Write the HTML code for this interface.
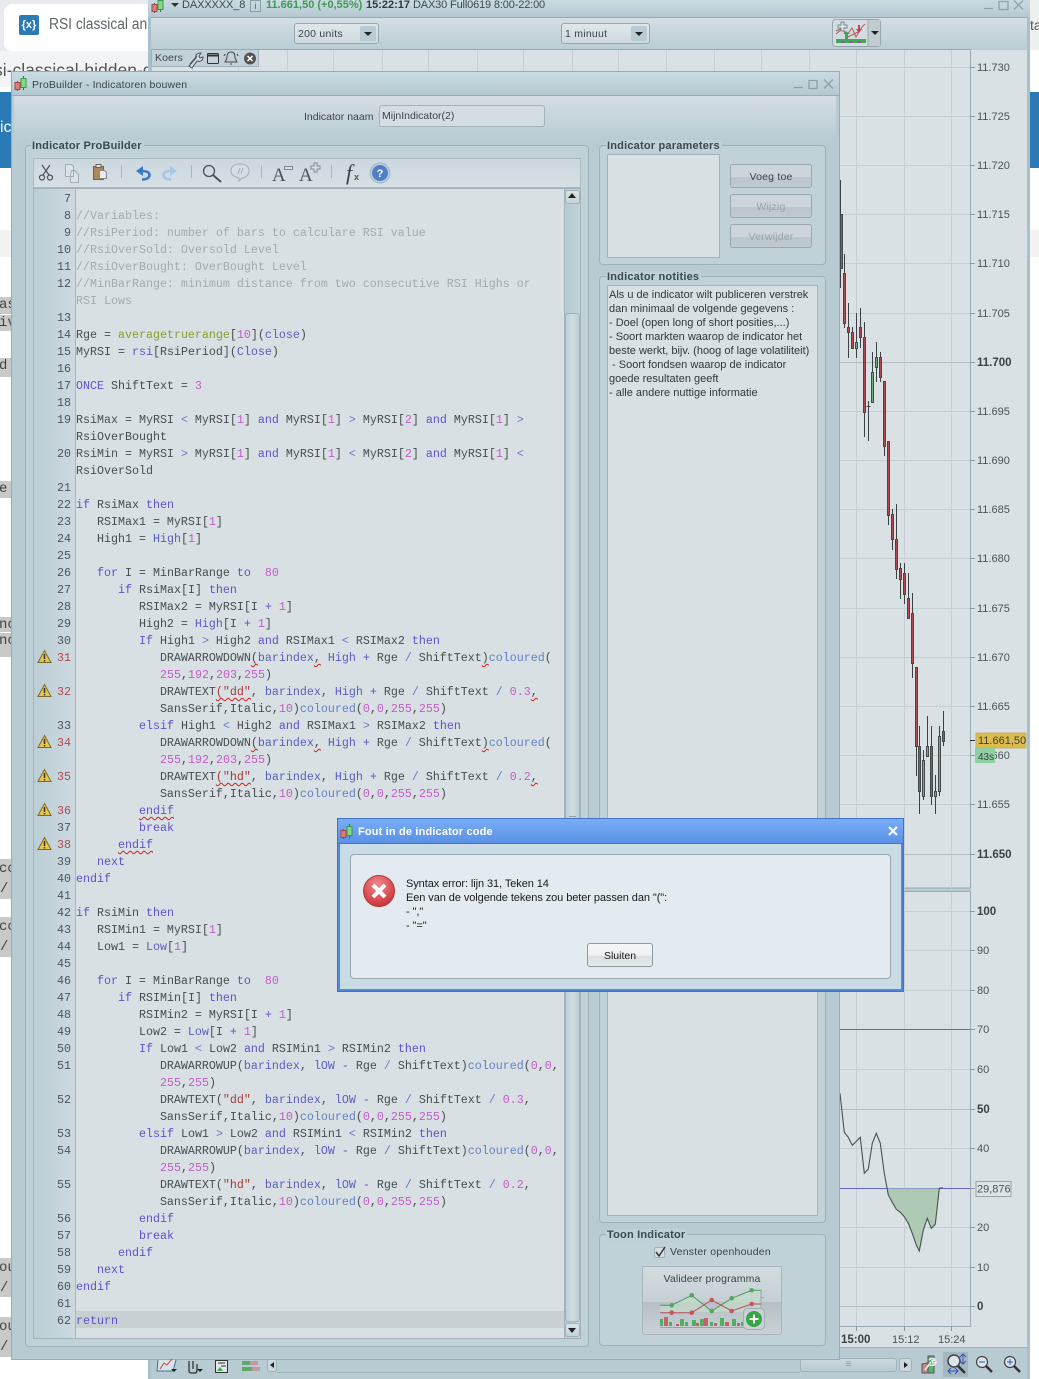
<!DOCTYPE html>
<html><head><meta charset="utf-8"><title>ProBuilder</title>
<style>
html,body{margin:0;padding:0;background:#fff}
body{width:1039px;height:1379px;position:relative;overflow:hidden;font-family:"Liberation Sans",sans-serif;font-size:10.5px;color:#3c4448}
.a{position:absolute}
.g{background:#c9c9c9;color:#444;font-size:14px;left:0;width:11px;overflow:hidden;white-space:nowrap;position:absolute;line-height:17px;font-family:"Liberation Mono",monospace;text-indent:-1px}
.dd{position:absolute;height:19px;top:23px;border:1px solid #94a6ae;border-radius:3px;background:linear-gradient(#dfe7ea,#cfdadf);font-size:10.5px;line-height:20px;padding-left:3px;box-sizing:content-box;letter-spacing:.25px}
.dd i{position:absolute;right:2px;top:2px;width:16px;height:15px;background:#b9ccd4;border-radius:2px}
.dd i:after{content:"";position:absolute;left:4px;top:6px;border:4px solid transparent;border-top:4px solid #222;border-bottom:0}
.grp{position:absolute;border:1px solid #9fb1b9;border-radius:4px;background:#c1d1d8;box-sizing:border-box}
.lbl{position:absolute;font-weight:bold;font-size:11px;color:#3c4a50;background:#bed0d8;padding:0 2px 1px 1px;border-radius:3px;line-height:13px;white-space:nowrap;letter-spacing:.2px}
.btn{position:absolute;left:730px;width:82px;height:24px;box-sizing:border-box;border:1px solid #98a8af;border-radius:3px;background:linear-gradient(#ccd6da 0,#ccd6da 55%,#bac6cb 56%,#c0cbd0 100%);text-align:center;line-height:24px;font-size:10.5px;color:#3c4448;letter-spacing:.2px}
.btn.d{color:#98a2a7}
pre{margin:0;font-family:"Liberation Mono",monospace;font-size:11.67px;line-height:17px;position:absolute;white-space:pre}
#code{left:76px;top:191px;color:#474d51}
#nums{left:33px;width:38px;top:191px;text-align:right;color:#4d5559}
#nums b{font-weight:normal;color:#b5474f}
s{text-decoration:none}
.k{color:#5d52c9}.n{color:#c45cc8}.c{color:#a3abae}.h{color:#5a5fbd}.o{color:#6a78c8}.f{color:#8c9c2e}.u{color:#6382c4}.q{color:#a83a3a}
.w{text-decoration:underline wavy #d02020 1px;text-underline-offset:2px}
</style></head><body>

<!-- browser behind -->
<div class="a" style="left:0;top:0;width:148px;height:72px;background:#e8eaed"></div>
<div class="a" style="left:4px;top:4px;width:144px;height:47px;background:#fff;border-radius:8px 0 0 8px"></div>
<div class="a" style="left:0;top:51px;width:148px;height:36px;background:#f3f4f5"></div>
<div class="a" style="left:19px;top:15px;width:20px;height:20px;background:#2b7ab6;border-radius:2px;color:#fff;font-size:11px;line-height:20px;text-align:center;font-weight:bold">{x}</div>
<div class="a" style="left:49px;top:15px;width:110px;overflow:hidden;font-size:15.5px;line-height:20px;color:#5f6368;white-space:nowrap;transform:scaleX(.89);transform-origin:0 0">RSI classical and</div>
<div class="a" style="left:-6px;top:60px;width:154px;overflow:hidden;font-size:17.5px;line-height:20px;color:#555;white-space:nowrap">si-classical-hidden-divergence</div>
<div class="a" style="left:0;top:92px;width:12px;height:76px;background:#2a7ab8;color:#fff;font-size:16px;line-height:72px;overflow:hidden">ic</div>
<div class="a" style="left:0;top:230px;width:12px;height:27px;background:#f2f2f2"></div>
<div class="g" style="top:297px;height:17px">as</div><div class="g" style="top:315px;height:16px">iv</div>
<div class="g" style="top:358px;height:19px">d'</div><div class="g" style="top:481px;height:17px">e</div>
<div class="g" style="top:617px;height:15px">nc</div><div class="g" style="top:633px;height:24px">nc</div>
<div class="g" style="top:859px;height:40px;line-height:20px">cc<br>/</div><div class="g" style="top:917px;height:40px;line-height:20px">cc<br>/</div>
<div class="g" style="top:1258px;height:39px;line-height:20px">ou<br>/</div><div class="g" style="top:1317px;height:40px;line-height:20px">ou<br>/</div>
<!-- right of main window -->
<div class="a" style="left:1030px;top:0;width:9px;height:50px;background:#eef0f1;color:#555;font-size:14px;line-height:50px;overflow:hidden">ta</div>
<div class="a" style="left:1030px;top:92px;width:9px;height:76px;background:#2a7ab8"></div>
<div class="a" style="left:1030px;top:230px;width:9px;height:27px;background:#f2f2f2"></div>

<!-- main window -->
<div class="a" style="left:148px;top:0;width:882px;height:1379px;background:#b8cbd3"></div>
<div class="a" style="left:148px;top:0;width:882px;height:17px;background:linear-gradient(#c9dae1,#b5c9d2);border-bottom:1px solid #98abb4"></div>
<div class="a" style="left:151px;top:18px;width:876px;height:32px;background:linear-gradient(#d4dfe3,#b9ccd4)"></div>
<div class="a" style="left:182px;top:-1px;font-size:11px;line-height:13px;white-space:nowrap;color:#3c4a50;letter-spacing:-.1px">DAXXXXX_8</div>
<div class="a" style="left:250px;top:0;width:9px;height:10px;border:1px solid #8a9ca4;font-size:9px;line-height:10px;text-align:center;color:#566">i</div>
<div class="a" style="left:266px;top:-1px;font-size:11px;line-height:13px;white-space:nowrap;color:#3f9a50;font-weight:bold">11.661,50 (+0,55%)</div>
<div class="a" style="left:366px;top:-1px;font-size:11px;line-height:13px;white-space:nowrap;font-weight:bold;color:#2f3a3f">15:22:17</div>
<div class="a" style="left:413px;top:-1px;font-size:11px;line-height:13px;white-space:nowrap;color:#3c4a50;letter-spacing:-.15px">DAX30 Full0619 8:00-22:00</div>
<div class="dd" style="left:294px;width:80px">200 units<i></i></div>
<div class="dd" style="left:561px;width:84px">1 minuut<i></i></div>

<!-- chart -->
<svg class="a" style="left:0;top:0" width="1039" height="1379" viewBox="0 0 1039 1379" font-family="Liberation Sans" font-size="11" fill="#4a5358">
<rect x="151" y="49.500" width="819.500" height="838.500" fill="#d9e1e4" stroke="#98aab2"/>
<rect x="971" y="50" width="56" height="1297" fill="#d9e1e4"/>
<rect x="151" y="891.500" width="819.500" height="435" fill="#d9e1e4" stroke="#98aab2"/>
<rect x="151" y="1327" width="876" height="20" fill="#d9e1e4"/>
<rect x="971" y="888" width="56" height="4" fill="#d9e1e4"/>
<rect x="151" y="1347" width="876" height="1" fill="#9fb2ba"/>
<g stroke="#c6d0d4" fill="none">
<path d="M192.500 50V888M238.500 50V888M287.500 50V888M333.500 50V888M382.500 50V888M428.500 50V888M477.500 50V888M523.500 50V888M572.500 50V888M618.500 50V888M666.500 50V888M714.500 50V888M761.500 50V888M809.500 50V888M856.500 50V888M904.500 50V888M951.500 50V888"/>
<path d="M856.500 892V1326M904.500 892V1326M951.500 892V1326"/>
<path d="M840 67.500H970M840 116.500H970M840 165.500H970M840 214.500H970M840 263.500H970M840 313.500H970M840 411.500H970M840 460.500H970M840 509.500H970M840 558.500H970M840 608.500H970M840 657.500H970M840 706.500H970M840 755.500H970M840 804.500H970"/>
<path d="M840 911.500H970M840 950.500H970M840 990.500H970M840 1069.500H970M840 1148.500H970M840 1227.500H970M840 1267.500H970"/>
</g>
<g stroke="#b3bec3" fill="none"><path d="M840 362.500H970M840 854.500H970M840 1109.500H970M840 1306.500H970"/></g>
<path d="M840 1029.500H970M840 1188.500H970" stroke="#6068c4" fill="none"/>
<path d="M887.700 1188.500L888.300 1195 896.300 1209.300 900.300 1212.300 904.300 1216.700 908.300 1223.300 912.300 1233.300 916.300 1245 919.300 1251 923.300 1230 927.300 1218.300 931.300 1228.300 935.300 1224.300 939.300 1188.500Z" fill="#aecab4"/>
<path d="M840 1093.300L844.300 1132.300 848.300 1137.300 852.300 1145.300 860.300 1137.300 864.300 1173.300 868.300 1169 872.300 1143.300 876.300 1133.300 880.300 1143.300 884.300 1173.300 888.300 1195 892.300 1202.300 896.300 1209.300 900.300 1212.300 904.300 1216.700 908.300 1223.300 912.300 1233.300 916.300 1245 919.300 1251 923.300 1230 927.300 1218.300 931.300 1228.300 935.300 1224.300 939.300 1188.300 942.700 1187.700" fill="none" stroke="#4a5054" stroke-width="1.100"/>
<!-- wicks -->
<path d="M840.500 180V288M844.500 254V328M848.500 303V358M852.500 327V348M856.500 313V358M860.500 308V348M864.500 322V437M868.500 401V441M866.500 406.500H870.500M872.500 352V402M876.500 342V382M880.500 352V382M884.500 381V456M888.500 441V525M892.500 509V550M896.500 504V579M900.500 563V599M904.500 563V604M908.500 573V618M912.500 593V678M916.500 667V776M919.500 726V814M923.500 750V800M927.500 716V756M931.500 726V805M935.500 775V814M939.500 726V796M943.500 711V746" stroke="#3a4044" fill="none"/>
<g fill="#b04a50" stroke="#444a4c">
<rect x="840.500" y="214.500" width="2" height="54"/><rect x="843.500" y="273.500" width="2" height="50"/><rect x="847.500" y="327.500" width="2" height="5"/><rect x="851.500" y="332.500" width="2" height="16"/><rect x="859.500" y="327.500" width="2" height="10"/><rect x="863.500" y="337.500" width="2" height="75"/><rect x="879.500" y="357.500" width="2" height="20"/><rect x="883.500" y="381.500" width="2" height="65"/><rect x="887.500" y="441.500" width="2" height="74"/><rect x="891.500" y="514.500" width="2" height="25"/><rect x="895.500" y="539.500" width="2" height="30"/><rect x="899.500" y="568.500" width="2" height="11"/><rect x="903.500" y="573.500" width="2" height="21"/><rect x="907.500" y="598.500" width="2" height="20"/><rect x="911.500" y="613.500" width="2" height="50"/><rect x="915.500" y="667.500" width="2" height="79"/><rect x="918.500" y="746.500" width="2" height="45"/><rect x="930.500" y="746.500" width="2" height="50"/><rect x="942.500" y="731.500" width="2" height="10"/>
</g>
<g fill="#6caf7c" stroke="#444a4c">
<rect x="855.500" y="342.500" width="2" height="6"/><rect x="871.500" y="372.500" width="2" height="30"/><rect x="875.500" y="357.500" width="2" height="10"/><rect x="922.500" y="760.500" width="2" height="36"/><rect x="926.500" y="746.500" width="2" height="10"/><rect x="934.500" y="791.500" width="2" height="5"/><rect x="938.500" y="736.500" width="2" height="55"/>
</g>
<!-- axis ticks -->
<path d="M970 67.500h5M970 116.500h5M970 165.500h5M970 214.500h5M970 263.500h5M970 313.500h5M970 362.500h5M970 411.500h5M970 460.500h5M970 509.500h5M970 558.500h5M970 608.500h5M970 657.500h5M970 706.500h5M970 755.500h5M970 804.500h5M970 854.500h5M970 911.500h5M970 950.500h5M970 990.500h5M970 1029.500h5M970 1069.500h5M970 1109.500h5M970 1148.500h5M970 1188.500h5M970 1227.500h5M970 1267.500h5M970 1306.500h5M856.500 1326v5M904.500 1326v5M951.500 1326v5" stroke="#8a9aa2" fill="none"/>
<g>
<text x="977" y="71">11.730</text><text x="977" y="120">11.725</text><text x="977" y="169">11.720</text><text x="977" y="218">11.715</text><text x="977" y="267">11.710</text><text x="977" y="317">11.705</text><text x="977" y="366" font-weight="bold" font-size="11.500" fill="#3a4246">11.700</text><text x="977" y="415">11.695</text><text x="977" y="464">11.690</text><text x="977" y="513">11.685</text><text x="977" y="562">11.680</text><text x="977" y="612">11.675</text><text x="977" y="661">11.670</text><text x="977" y="710">11.665</text><text x="977" y="759">11.660</text><text x="977" y="808">11.655</text><text x="977" y="858" font-weight="bold" font-size="11.500" fill="#3a4246">11.650</text>
<text x="977" y="915" font-weight="bold" font-size="11.500" fill="#3a4246">100</text><text x="977" y="954">90</text><text x="977" y="994">80</text><text x="977" y="1033">70</text><text x="977" y="1073">60</text><text x="977" y="1113" font-weight="bold" font-size="11.500" fill="#3a4246">50</text><text x="977" y="1152">40</text><text x="977" y="1231">20</text><text x="977" y="1271">10</text><text x="977" y="1310" font-weight="bold" font-size="11.500" fill="#3a4246">0</text>
<text x="841" y="1343" font-weight="bold" font-size="11.500" fill="#3a4246">15:00</text><text x="892" y="1343">15:12</text><text x="938" y="1343">15:24</text>
</g>
<rect x="976" y="733" width="50" height="15" fill="#dcbc4c" stroke="#c0b070"/><text x="978" y="744" fill="#3a4246">11.661,50</text>
<path d="M970 740.500h5" stroke="#333"/>
<rect x="975" y="748" width="20" height="15" fill="#8fd0a0"/><text x="978" y="760" font-size="10" fill="#3a4246">43s</text>
<rect x="976" y="1181.500" width="35" height="15" fill="#dde4e7" stroke="#97a4aa"/><text x="977" y="1192.500">29,876</text>
</svg>

<!-- Koers box -->
<div class="a" style="left:151px;top:50px;width:108px;height:17px;background:#c3d2d9;border:1px solid #a0b1b9;border-top:0;box-sizing:border-box;line-height:17px;font-size:10.5px;padding-left:3px;letter-spacing:.1px">Koers</div>

<!-- bottom strip -->
<div class="a" style="left:148px;top:1348px;width:882px;height:31px;background:#b8cbd3"></div>
<div class="a" style="left:277px;top:1372px;width:523px;height:1px;background:#9fb2ba"></div>
<div class="a" style="left:267px;top:1358px;width:10px;height:14px;background:#cbd8de;border:1px solid #a0b1b9;border-radius:3px;box-sizing:border-box"></div>
<div class="a" style="left:800px;top:1358px;width:97px;height:14px;background:linear-gradient(#cbd8de,#b8cad2);border:1px solid #a0b1b9;border-radius:3px;box-sizing:border-box;text-align:center;font-size:10px;line-height:12px;color:#8a9aa2">≡</div>
<div class="a" style="left:899px;top:1358px;width:13px;height:14px;background:#cbd8de;border:1px solid #a0b1b9;border-radius:3px;box-sizing:border-box"></div>
<div class="a" style="left:943px;top:1352px;width:25px;height:25px;background:#a4b6be"></div>
<div class="a" style="left:1027px;top:17px;width:3px;height:1362px;background:#a9bfc9"></div>
<div class="a" style="left:148px;top:17px;width:3px;height:1362px;background:#a9bfc9"></div>

<!-- ProBuilder window -->
<div class="a" style="left:11px;top:71px;width:829px;height:1289px;background:#b8cbd3;border:1px solid #98abb4;box-sizing:border-box"></div>
<div class="a" style="left:12px;top:72px;width:827px;height:24px;background:linear-gradient(#cbdce3,#b4c8d1);border-bottom:1px solid #98abb4;box-sizing:border-box"></div>
<div class="a" style="left:14px;top:96px;width:822px;height:44px;background:linear-gradient(#d4dfe3,#b8cbd3)"></div>
<div class="a" style="left:32px;top:79px;font-size:10.5px;line-height:13px;white-space:nowrap;letter-spacing:.17px">ProBuilder - Indicatoren bouwen</div>
<div class="a" style="left:304px;top:111px;font-size:10.5px;line-height:13px;white-space:nowrap">Indicator naam</div>
<div class="a" style="left:379px;top:105px;width:166px;height:22px;box-sizing:border-box;border:1px solid #a2b3ba;border-radius:3px;background:#d4dee2;font-size:10.5px;line-height:21px;padding:0 0 0 2px">MijnIndicator(2)</div>

<div class="grp" style="left:25px;top:145px;width:564px;height:1202px"></div>
<div class="lbl" style="left:31px;top:140px">Indicator ProBuilder</div>
<div class="a" style="left:33px;top:158px;width:548px;height:30px;background:linear-gradient(#cbd8de,#d6e0e4);border:1px solid #a9b9c0;box-sizing:border-box"></div>
<div class="a" style="left:33px;top:188px;width:548px;height:1151px;background:#d8e0e3;border:1px solid #a3b3ba;box-sizing:border-box"></div>
<div class="a" style="left:34px;top:189px;width:42px;height:1149px;background:linear-gradient(90deg,#bccdd5,#ccdae0);border-right:1px solid #a7b6bc;box-sizing:border-box"></div>
<div class="a" style="left:76px;top:1311px;width:488px;height:17px;background:#c8d0d3"></div>

<pre id="nums">7
8
9
10
11
12

13
14
15
16
17
18
19

20

21
22
23
24
25
26
27
28
29
30
<b>31</b>

<b>32</b>

33
<b>34</b>

<b>35</b>

<b>36</b>
37
<b>38</b>
39
40
41
42
43
44
45
46
47
48
49
50
51

52

53
54

55

56
57
58
59
60
61
62</pre>
<pre id="code">

<s class="c">//Variables:</s>
<s class="c">//RsiPeriod: number of bars to calculare RSI value</s>
<s class="c">//RsiOverSold: Oversold Level</s>
<s class="c">//RsiOverBought: OverBought Level</s>
<s class="c">//MinBarRange: minimum distance from two consecutive RSI Highs or</s>
<s class="c">RSI Lows</s>

Rge = <s class="f">averagetruerange</s>[<s class="n">10</s>](<s class="h">close</s>)
MyRSI = <s class="h">rsi</s>[RsiPeriod](<s class="h">Close</s>)

<s class="k">ONCE</s> ShiftText = <s class="n">3</s>

RsiMax = MyRSI <s class="o">&lt;</s> MyRSI[<s class="n">1</s>] <s class="k">and</s> MyRSI[<s class="n">1</s>] <s class="o">&gt;</s> MyRSI[<s class="n">2</s>] <s class="k">and</s> MyRSI[<s class="n">1</s>] <s class="o">&gt;</s>
RsiOverBought
RsiMin = MyRSI <s class="o">&gt;</s> MyRSI[<s class="n">1</s>] <s class="k">and</s> MyRSI[<s class="n">1</s>] <s class="o">&lt;</s> MyRSI[<s class="n">2</s>] <s class="k">and</s> MyRSI[<s class="n">1</s>] <s class="o">&lt;</s>
RsiOverSold

<s class="k">if</s> RsiMax <s class="k">then</s>
   RSIMax1 = MyRSI[<s class="n">1</s>]
   High1 = <s class="h">High</s>[<s class="n">1</s>]

   <s class="k">for</s> I = MinBarRange <s class="k">to</s>  <s class="n">80</s>
      <s class="k">if</s> RsiMax[I] <s class="k">then</s>
         RSIMax2 = MyRSI[I <s class="k">+</s> <s class="n">1</s>]
         High2 = <s class="h">High</s>[I <s class="k">+</s> <s class="n">1</s>]
         <s class="k">If</s> High1 <s class="o">&gt;</s> High2 <s class="k">and</s> RSIMax1 <s class="o">&lt;</s> RSIMax2 <s class="k">then</s>
            DRAWARROWDOWN<s class="w">(</s><s class="h">barindex</s><s class="w">,</s> <s class="h">High</s> <s class="k">+</s> Rge <s class="o">/</s> ShiftText<s class="w">)</s><s class="u">coloured</s>(
            <s class="n">255</s>,<s class="n">192</s>,<s class="n">203</s>,<s class="n">255</s>)
            DRAWTEXT<s class="w q">("dd"</s>, <s class="h">barindex</s>, <s class="h">High</s> <s class="k">+</s> Rge <s class="o">/</s> ShiftText <s class="o">/</s> <s class="n">0.3</s><s class="w">,</s>
            SansSerif,Italic,<s class="n">10</s>)<s class="u">coloured</s>(<s class="n">0</s>,<s class="n">0</s>,<s class="n">255</s>,<s class="n">255</s>)
         <s class="k">elsif</s> High1 <s class="o">&lt;</s> High2 <s class="k">and</s> RSIMax1 <s class="o">&gt;</s> RSIMax2 <s class="k">then</s>
            DRAWARROWDOWN<s class="w">(</s><s class="h">barindex</s><s class="w">,</s> <s class="h">High</s> <s class="k">+</s> Rge <s class="o">/</s> ShiftText<s class="w">)</s><s class="u">coloured</s>(
            <s class="n">255</s>,<s class="n">192</s>,<s class="n">203</s>,<s class="n">255</s>)
            DRAWTEXT<s class="w q">("hd"</s>, <s class="h">barindex</s>, <s class="h">High</s> <s class="k">+</s> Rge <s class="o">/</s> ShiftText <s class="o">/</s> <s class="n">0.2</s><s class="w">,</s>
            SansSerif,Italic,<s class="n">10</s>)<s class="u">coloured</s>(<s class="n">0</s>,<s class="n">0</s>,<s class="n">255</s>,<s class="n">255</s>)
         <s class="k w">endif</s>
         <s class="k">break</s>
      <s class="k w">endif</s>
   <s class="k">next</s>
<s class="k">endif</s>

<s class="k">if</s> RsiMin <s class="k">then</s>
   RSIMin1 = MyRSI[<s class="n">1</s>]
   Low1 = <s class="h">Low</s>[<s class="n">1</s>]

   <s class="k">for</s> I = MinBarRange <s class="k">to</s>  <s class="n">80</s>
      <s class="k">if</s> RSIMin[I] <s class="k">then</s>
         RSIMin2 = MyRSI[I <s class="k">+</s> <s class="n">1</s>]
         Low2 = <s class="h">Low</s>[I <s class="k">+</s> <s class="n">1</s>]
         <s class="k">If</s> Low1 <s class="o">&lt;</s> Low2 <s class="k">and</s> RSIMin1 <s class="o">&gt;</s> RSIMin2 <s class="k">then</s>
            DRAWARROWUP(<s class="h">barindex</s>, <s class="h">lOW</s> <s class="k">-</s> Rge <s class="o">/</s> ShiftText)<s class="u">coloured</s>(<s class="n">0</s>,<s class="n">0</s>,
            <s class="n">255</s>,<s class="n">255</s>)
            DRAWTEXT(<s class="q">"dd"</s>, <s class="h">barindex</s>, <s class="h">lOW</s> <s class="k">-</s> Rge <s class="o">/</s> ShiftText <s class="o">/</s> <s class="n">0.3</s>,
            SansSerif,Italic,<s class="n">10</s>)<s class="u">coloured</s>(<s class="n">0</s>,<s class="n">0</s>,<s class="n">255</s>,<s class="n">255</s>)
         <s class="k">elsif</s> Low1 <s class="o">&gt;</s> Low2 <s class="k">and</s> RSIMin1 <s class="o">&lt;</s> RSIMin2 <s class="k">then</s>
            DRAWARROWUP(<s class="h">barindex</s>, <s class="h">lOW</s> <s class="k">-</s> Rge <s class="o">/</s> ShiftText)<s class="u">coloured</s>(<s class="n">0</s>,<s class="n">0</s>,
            <s class="n">255</s>,<s class="n">255</s>)
            DRAWTEXT(<s class="q">"hd"</s>, <s class="h">barindex</s>, <s class="h">lOW</s> <s class="k">-</s> Rge <s class="o">/</s> ShiftText <s class="o">/</s> <s class="n">0.2</s>,
            SansSerif,Italic,<s class="n">10</s>)<s class="u">coloured</s>(<s class="n">0</s>,<s class="n">0</s>,<s class="n">255</s>,<s class="n">255</s>)
         <s class="k">endif</s>
         <s class="k">break</s>
      <s class="k">endif</s>
   <s class="k">next</s>
<s class="k">endif</s>

<s class="k">return</s></pre>

<!-- editor scrollbar -->
<div class="a" style="left:564px;top:189px;width:16px;height:1149px;background:linear-gradient(90deg,#b5c8d0,#c3d3da);border-left:1px solid #a3b3ba;box-sizing:border-box"></div>
<div class="a" style="left:565px;top:190px;width:15px;height:14px;background:linear-gradient(#dbe4e7,#c5d3d9);border:1px solid #a0b1b9;border-radius:3px;box-sizing:border-box"></div>
<div class="a" style="left:565px;top:313px;width:15px;height:1009px;background:linear-gradient(90deg,#bfd0d7,#d0dce1 50%,#bccdd5);border:1px solid #a0b1b9;border-radius:3px;box-sizing:border-box"></div>
<div class="a" style="left:565px;top:1323px;width:15px;height:14px;background:linear-gradient(#dbe4e7,#c5d3d9);border:1px solid #a0b1b9;border-radius:3px;box-sizing:border-box"></div>
<div class="a" style="left:569px;top:816px;width:7px;height:5px;border-top:1px solid #8fa2aa;border-bottom:1px solid #8fa2aa;box-sizing:border-box"></div>

<!-- right side -->
<div class="grp" style="left:599px;top:145px;width:227px;height:120px"></div>
<div class="lbl" style="left:606px;top:140px">Indicator parameters</div>
<div class="a" style="left:607px;top:154px;width:113px;height:104px;background:#d8e0e3;border:1px solid #a3b3ba;box-sizing:border-box"></div>
<div class="btn" style="top:164px">Voeg toe</div>
<div class="btn d" style="top:194px">Wijzig</div>
<div class="btn d" style="top:224px">Verwijder</div>

<div class="grp" style="left:599px;top:276px;width:227px;height:947px"></div>
<div class="lbl" style="left:606px;top:271px">Indicator notities</div>
<div class="a" style="left:607px;top:285px;width:211px;height:931px;background:#d8e0e3;border:1px solid #a3b3ba;box-sizing:border-box;padding:2px 0 0 1px;font-size:11px;line-height:14px;white-space:pre;color:#30383c;overflow:hidden">Als u de indicator wilt publiceren verstrek
dan minimaal de volgende gegevens :
- Doel (open long of short posities,...)
- Soort markten waarop de indicator het
beste werkt, bijv. (hoog of lage volatiliteit)
 - Soort fondsen waarop de indicator
goede resultaten geeft
- alle andere nuttige informatie</div>

<div class="grp" style="left:599px;top:1234px;width:227px;height:112px"></div>
<div class="lbl" style="left:606px;top:1229px">Toon Indicator</div>
<div class="a" style="left:670px;top:1246px;font-size:10.5px;line-height:13px;white-space:nowrap;letter-spacing:.22px">Venster openhouden</div>
<div class="a" style="left:654px;top:1247px;width:11px;height:11px;background:#d5dfe3;border:1px solid #a0b1b9;border-radius:2px;box-sizing:border-box"></div>
<div class="a" style="left:642px;top:1266px;width:140px;height:69px;border:1px solid #a7b5bb;border-radius:3px;box-sizing:border-box;background:linear-gradient(#d3dcdf 0,#c6d0d4 52%,#b6c0c5 52%,#c9d1d5 100%);text-align:center;font-size:10.5px;line-height:24px;letter-spacing:.15px">Valideer programma</div>

<!-- icons overlay -->
<svg class="a" style="left:0;top:0" width="1039" height="1379" viewBox="0 0 1039 1379" fill="none">
<defs>
<g id="logo"><path d="M3.500 5V15M9.500 0V14" stroke="#5a5a5a"/><rect x="1" y="6.500" width="5" height="7" fill="#e27a7a" stroke="#a04a4a"/><rect x="7" y="2.500" width="5" height="9" fill="#7fdc7f" stroke="#3f9a4f"/></g>
<g id="warn"><path d="M6.500 .5L13 12.500H0Z" fill="#e8c64a" stroke="#7a6a2a"/><path d="M6.500 4V9M6.500 10v1.500" stroke="#333" stroke-width="1.500"/></g>
</defs>
<use href="#logo" x="151" y="-2"/><use href="#logo" x="14" y="76"/>
<path d="M171 3h8l-4 4Z" fill="#333"/>
<!-- window controls -->
<path d="M984 8.500h9M999 1.500h9v8h-9zM1014 .5l9 9M1023 .5l-9 9" stroke="#8ea0a8" stroke-width="1.300"/>
<path d="M794 87.500h9M809 80.500h8v8h-8zM824 79.500l9 9M833 79.500l-9 9" stroke="#8ea0a8" stroke-width="1.300"/>
<!-- chart type btn -->
<rect x="832.500" y="19.500" width="48" height="27" rx="3" fill="#d3dde1" stroke="#98a8af"/><rect x="868" y="20" width="12" height="26" fill="#c2ccd0"/><path d="M868 20v26" stroke="#98a8af"/>
<path d="M871 31h8l-4 4Z" fill="#222"/>
<path d="M836 34l6-5 5 6 5-7 4 9 6-10 3-3M836 31l6-3 6 9 6-3 4-2" stroke="#b35a5a"/>
<path d="M838 25h3v-3h3v3h3v3h-3v3h-3v-3h-3z" fill="#dbe4e7" stroke="#7a8a90"/>
<path d="M846 31l-3 3h2v5h3v-5h2z" fill="#3aa552"/><path d="M858 25v4h-2l3 4 3-4h-2v-4z" fill="#c8404a"/>
<path d="M836 39h30v4h-30z" fill="#3faa55"/><path d="M841 41h4v2h-4zM849 41h4v2h-4zM857 41h4v2h-4z" fill="#a050a0"/>
<!-- koers icons -->
<path d="M190 64l7-8 M196 58c-1-3 1-5 5-5l-2 3 1 2 3-1c0 4-3 5-6 4l-5 7-3-2z" stroke="#4a5358" fill="#d3dde1"/>
<rect x="207.500" y="53.500" width="11" height="10" rx="1" stroke="#333"/><path d="M208 55.500h10" stroke="#333" stroke-width="2"/>
<path d="M231 52c-3 0-4 2-4 5s-2 4-2 5h12c0-1-2-2-2-5s-1-5-4-5zM230 64h2" stroke="#444"/><path d="M225 54l-1 2M237 54l1 2" stroke="#444"/>
<circle cx="250" cy="58.500" r="6" fill="#555"/><path d="M247.500 56l5 5M252.500 56l-5 5" stroke="#fff" stroke-width="1.500"/>
<!-- scrollbar arrows -->
<path d="M568 198l4-5 4 5z M568 1328l4 5 4-5z" fill="#222"/>
<!-- toolbar icons -->
<g stroke="#4a5358" stroke-width="1.200">
<circle cx="42" cy="177.500" r="2.500"/><circle cx="50" cy="177.500" r="2.500"/><path d="M43 175l7-10M49 175l-7-10"/>
</g>
<g stroke="#a0adb3"><path d="M65.500 164.500h6l2 2v10h-8zM71.500 170.500h3l4 4v8h-8v-8z" fill="#dbe3e6"/></g>
<path d="M93.500 166.500h10v13h-10z" fill="#b08858" stroke="#7a6040"/><path d="M96 164.500h5v3h-5z" fill="#dbe3e6" stroke="#666"/><path d="M99.500 170.500h5l2 2v6h-7z" fill="#e6ecee" stroke="#888"/>
<path d="M121.500 165v13M191.500 165v13M261.500 165v13M331.500 165v13" stroke="#a9b6bc"/>
<path d="M142 179.500c5 0 7.500-2 7.500-4.500 0-3-3-4-8-4" stroke="#3a78c8" stroke-width="2.600"/><path d="M143 166l-7 5 7 5z" fill="#3a78c8"/>
<path d="M171 179.500c-5 0-7.500-2-7.500-4.500 0-3 3-4 8-4" stroke="#a9c4e4" stroke-width="2.600"/><path d="M170 166l7 5-7 5z" fill="#a9c4e4"/>
<circle cx="209" cy="171" r="5.500" stroke="#4a5358" stroke-width="1.300"/><path d="M213 175l8 7" stroke="#4a5358" stroke-width="2"/>
<path d="M240 164c5 0 9 2 9 7 0 4-4 7-7 7l-3 3v-3c-4-1-8-3-8-7 0-5 4-7 9-7z" fill="#d5dfe3" stroke="#a0adb3"/><path d="M238 174l2-6M241 174l2-6" stroke="#a0adb3"/>
<text x="272" y="181" font-family="Liberation Serif" font-size="19" fill="#4a5358">A</text>
<rect x="284.500" y="166.500" width="8" height="3" fill="#d8e0e3" stroke="#7a8a90"/>
<text x="299" y="181" font-family="Liberation Serif" font-size="19" fill="#4a5358">A</text>
<path d="M311 166h3v-3h3v3h3v3h-3v3h-3v-3h-3z" fill="#d8e0e3" stroke="#7a8a90"/>
<text x="346" y="180" font-family="Liberation Serif" font-style="italic" font-size="22" fill="#3a4246">f</text><text x="354" y="180" font-family="Liberation Sans" font-size="9" font-weight="bold" fill="#555">x</text>
<circle cx="380" cy="173" r="10" fill="#bcd0e0" stroke="#9fb2c4"/><circle cx="380" cy="173" r="8" fill="#4f7ec4"/><text x="380" y="177" text-anchor="middle" font-family="Liberation Sans" font-size="11" font-weight="bold" fill="#fff">?</text>
<!-- warnings -->
<use href="#warn" x="38" y="650"/><use href="#warn" x="38" y="684"/><use href="#warn" x="38" y="735"/><use href="#warn" x="38" y="769"/><use href="#warn" x="38" y="803"/><use href="#warn" x="38" y="837"/>
<!-- checkbox -->
<path d="M656 1252l3 4 6-9" stroke="#333" stroke-width="1.500"/>
<!-- validate chart -->
<path d="M660 1305.300L671.700 1305.300 691.700 1295.300 711.700 1311 731.700 1298.300 751.700 1290.300 761.700 1290.300V1312H660Z" fill="#c6dccb" opacity=".7"/>
<path d="M660 1305.300L671.700 1305.300 691.700 1295.300 711.700 1311 731.700 1298.300 751.700 1290.300 761.700 1290.300" stroke="#4a9a5a"/>
<path d="M660 1312.700H691.700L711.700 1300 731.700 1311 751.700 1304H761.700" stroke="#b8505a"/>
<g fill="#4fa95f"><circle cx="671.700" cy="1305.300" r="2.300"/><circle cx="691.700" cy="1295.300" r="2.300"/><circle cx="711.700" cy="1311" r="2.300"/><circle cx="731.700" cy="1298.300" r="2.300"/><circle cx="751.700" cy="1290.300" r="2.300"/></g>
<g fill="#c8545e"><circle cx="671.700" cy="1312.700" r="2.300"/><circle cx="691.700" cy="1312.700" r="2.300"/><circle cx="711.700" cy="1300" r="2.300"/><circle cx="731.700" cy="1311" r="2.300"/><circle cx="751.700" cy="1304" r="2.300"/></g>
<path d="M660 1319h3v7h-3zM669 1322h3v4h-3zM680 1319h4v7h-4zM685 1322h3v4h-3zM692 1320h4v6h-4zM700 1319h4v7h-4zM710 1322h3v4h-3zM720 1318h4v8h-4zM732 1319h4v7h-4zM741 1322h3v4h-3z" fill="#4fb060"/>
<path d="M664 1317h4v9h-4zM676 1324h3v2h-3zM696 1323h3v3h-3zM705 1322h3v4h-3zM704 1318h4v8h-4zM714 1323h3v3h-3zM725 1322h4v4h-4zM737 1323h3v3h-3z" fill="#c8606a"/>
<path d="M660 1327.500h85M761 1290v18M761 1297.500h3" stroke="#99a4a9"/>
<rect x="743.500" y="1308.500" width="21" height="21" rx="4" fill="#c8d2d6" stroke="#a2aeb3"/>
<circle cx="754" cy="1319" r="8" fill="#37a63f"/><path d="M749.500 1319h9M754 1314.500v9" stroke="#fff" stroke-width="2"/>
<!-- bottom icons -->
<path d="M158 1360l-1 11h16l3-11" fill="#d8e4e8" stroke="#3f6f9f"/><path d="M160 1369l4-6 3 2 5-6" stroke="#c04a4a"/><path d="M171 1369h6l-3 3z" fill="#222"/>
<path d="M189 1361v10c0 2 2 2 3 2h3c2 0 2-2 2-4v-5M193 1361v8" stroke="#333" stroke-width="1.300"/><path d="M197 1369h6l-3 3z" fill="#222"/>
<rect x="215.500" y="1360.500" width="12" height="12" fill="#e0e8ea" stroke="#333"/><path d="M218 1363h7M221 1366h5" stroke="#333"/><path d="M217 1371l3-4 3 4z" fill="#3faa55"/>
<path d="M242 1361h10v4h-10zM242 1367h10v4h-10z" fill="#5ea868"/><path d="M250 1361h8v4h-8zM252 1367h8v4h-8z" fill="#c09aa0"/>
<path d="M274 1362v6l-4-3zM904 1362v6l4-3z" fill="#222"/>
<path d="M922 1373v-9l6-1v10z" fill="#c48a90" stroke="#555"/><path d="M928 1373v-17h6v17z" fill="#5fb06e" stroke="#555"/><path d="M925 1370l6-8M929 1360c2-2 5-2 6 0l-3 1 1 2 3-1c0 3-4 4-6 3" stroke="#eee" stroke-width="1.500"/>
<circle cx="954" cy="1361" r="6" fill="#dbe4e7" stroke="#444" stroke-width="1.500"/><path d="M958 1366l7 7" stroke="#333" stroke-width="2.500"/>
<path d="M963 1354v10M960 1357l3-3 3 3M960 1361l3 3 3-3M948 1371h10M951 1368l-3 3 3 3M955 1368l3 3-3 3" stroke="#3a50c8"/>
<circle cx="982" cy="1362" r="5.500" fill="#dbe4e7" stroke="#444" stroke-width="1.200"/><path d="M979 1362h6" stroke="#3a50c8"/><path d="M986 1366l6 6" stroke="#333" stroke-width="2.500"/>
<circle cx="1010" cy="1362" r="5.500" fill="#dbe4e7" stroke="#444" stroke-width="1.200"/><path d="M1007 1362h6M1010 1359v6" stroke="#3a50c8"/><path d="M1014 1366l6 6" stroke="#333" stroke-width="2.500"/>
</svg>

<!-- Dialog -->
<div class="a" style="left:337px;top:818px;width:567px;height:174px;background:#c9dbe4;border:1px solid #3f74c4;box-sizing:border-box;box-shadow:inset 0 0 0 2px #4f88de"></div>
<div class="a" style="left:338px;top:819px;width:565px;height:25px;background:linear-gradient(#79adf8,#5a91e4);border-bottom:1px solid #3f74c4;box-sizing:border-box"></div>
<div class="a" style="left:358px;top:825px;color:#fff;font-weight:bold;font-size:11px;line-height:14px;white-space:nowrap;letter-spacing:.16px">Fout in de indicator code</div>
<svg class="a" style="left:337px;top:818px" width="567" height="60" fill="none"><use href="#logo" x="3" y="6"/><path d="M552 9l8 8M560 9l-8 8" stroke="#fff" stroke-width="2"/></svg>
<div class="a" style="left:350px;top:854px;width:541px;height:125px;background:#e3ebf0;border:1px solid #98a6ad;border-radius:4px;box-sizing:border-box"></div>
<svg class="a" style="left:362px;top:875px" width="34" height="34"><defs><radialGradient id="re" cx=".45" cy=".3" r=".8"><stop offset="0" stop-color="#f08a8a"/><stop offset="1" stop-color="#c8272e"/></radialGradient></defs><circle cx="17" cy="16" r="15.500" fill="url(#re)" stroke="#b03a3a"/><path d="M11 10l12 12M23 10l-12 12" stroke="#fff" stroke-width="4"/></svg>
<div class="a" style="left:406px;top:877px;font-size:11px;line-height:14px;white-space:pre;color:#1a1a1a;letter-spacing:-.08px">Syntax error: lijn 31, Teken 14
Een van de volgende tekens zou beter passen dan "(":
- ","
- "="</div>
<div class="a" style="left:587px;top:943px;width:66px;height:24px;box-sizing:border-box;border:1px solid #8e9a9f;border-radius:3px;background:linear-gradient(#f4f6f7 0,#eef1f2 53%,#d9dee0 54%,#e4e8ea 100%);text-align:center;font-size:10.5px;line-height:24px;color:#1a1a1a">Sluiten</div>

</body></html>
